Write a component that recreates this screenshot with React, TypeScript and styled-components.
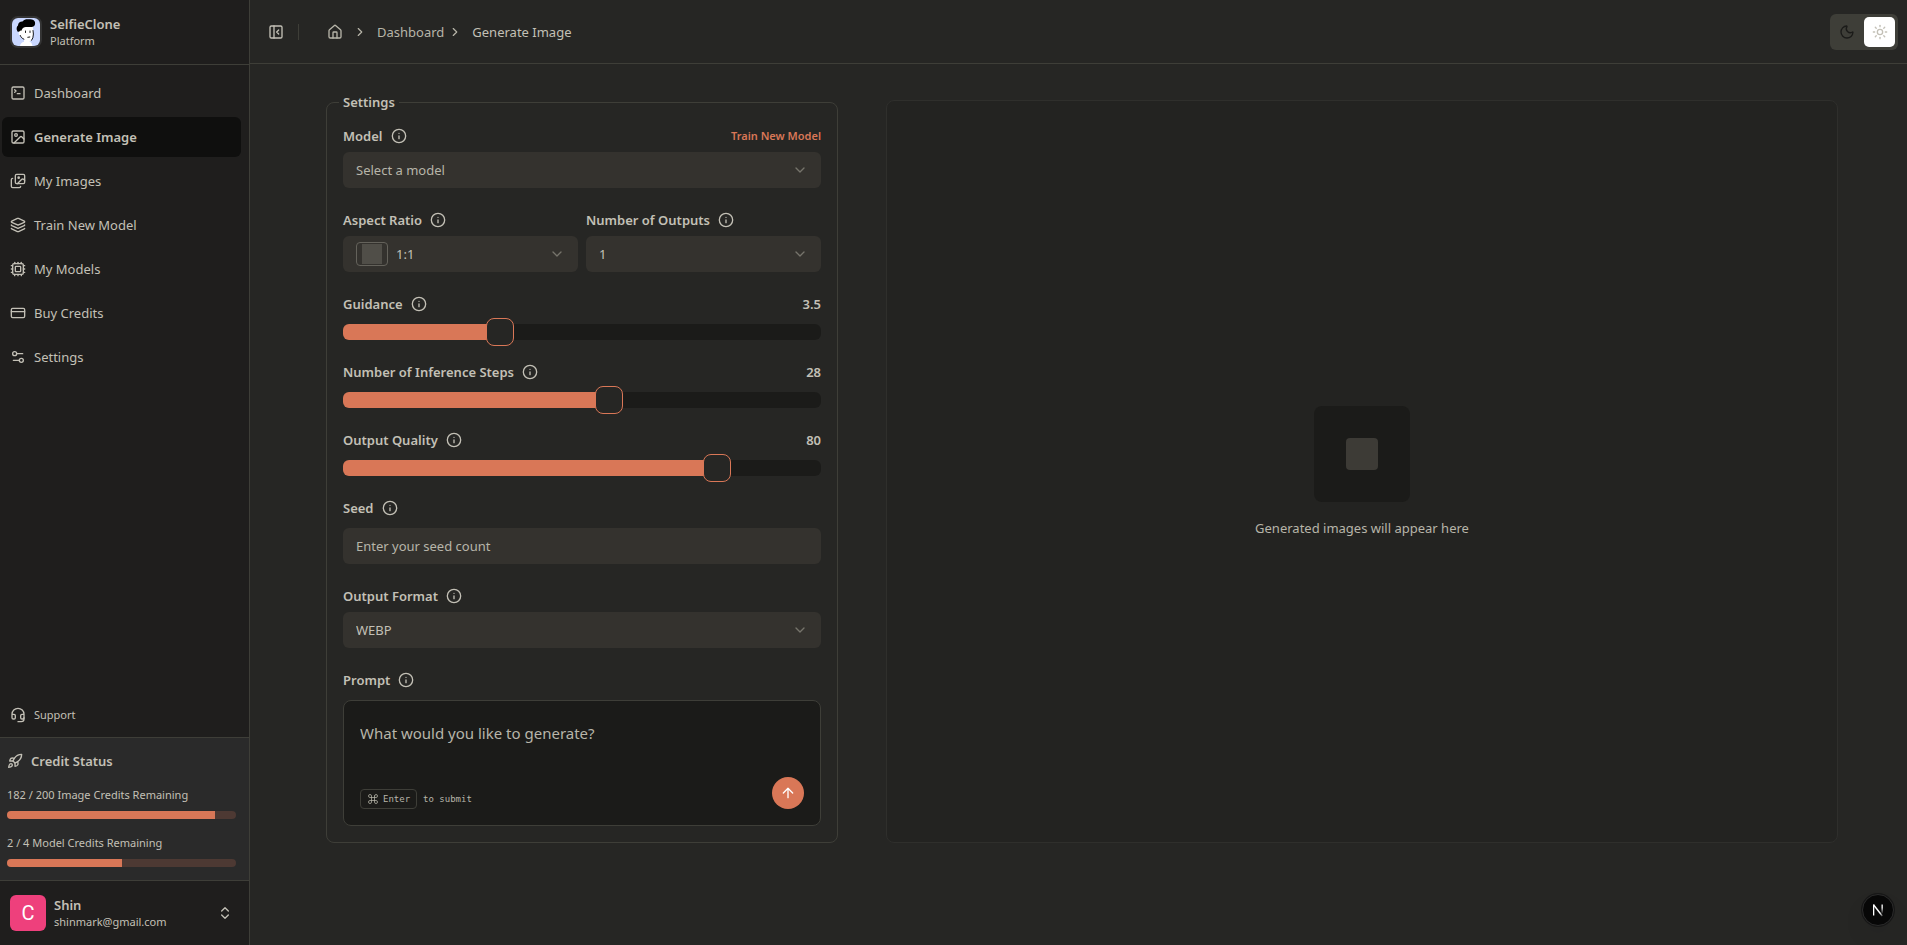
import React, { useState } from 'react';
import styled, { createGlobalStyle, css } from 'styled-components';
import {
  ArrowUp,
  ChevronDown,
  ChevronRight,
  ChevronsUpDown,
  Command,
  Cpu,
  CreditCard,
  Headset,
  House,
  Image as ImageIcon,
  Images,
  Info,
  Layers,
  Moon,
  PanelLeftClose,
  Rocket,
  Settings2,
  SquareTerminal,
  Sun,
} from 'lucide-react';

const color = {
  background: '#262624',
  foreground: '#c3c0b6',
  muted: '#1b1b19',
  mutedText: '#b7b5a9',
  border: '#3e3e38',
  field: '#34322e',
  swatch: '#504e48',
  primary: '#d97757',
  sidebar: '#1f1e1d',
  sidebarActive: '#0f0f0e',
};

const GlobalStyle = createGlobalStyle`
  *, *::before, *::after { box-sizing: border-box; }
  body {
    margin: 0;
    background: ${color.background};
    color: ${color.foreground};
    font-family: 'Noto Sans', 'Open Sans', sans-serif;
    font-size: 13px;
    line-height: 20px;
  }
  button, input, select, textarea { font: inherit; color: inherit; }
  button { cursor: pointer; }
  a { color: inherit; text-decoration: none; }
  svg { flex-shrink: 0; display: block; }
`;

const Shell = styled.div`
  display: flex;
  min-height: 100vh;
`;

/* ---------- sidebar ---------- */

const Sidebar = styled.aside`
  display: flex;
  flex-direction: column;
  flex: 0 0 250px;
  background: ${color.sidebar};
  border-right: 1px solid ${color.border};
`;

const Brand = styled.a`
  display: flex;
  align-items: center;
  gap: 8px;
  height: 65px;
  padding: 0 10px;
  border-bottom: 1px solid ${color.border};
`;

const BrandMark = styled.span`
  display: block;
  width: 32px;
  height: 32px;
  border: 2px solid #343434;
  border-radius: 8px;
  overflow: hidden;
`;

const TwoLines = styled.span`
  display: flex;
  flex-direction: column;
  flex: 1;
  min-width: 0;
`;

const Strong = styled.span`
  font-weight: 600;
  line-height: 18px;
`;

const Small = styled.span`
  font-size: 11px;
  line-height: 16px;
`;

const Nav = styled.nav`
  display: flex;
  flex-direction: column;
  gap: 4px;
  padding: 8px 8px 8px 2px;
`;

const NavLink = styled.a<{ $active?: boolean; $small?: boolean }>`
  display: flex;
  align-items: center;
  gap: 8px;
  height: ${p => (p.$small ? 28 : 40)}px;
  padding: 0 8px;
  border-radius: 6px;
  font-size: ${p => (p.$small ? 11 : 13)}px;
  ${p =>
    p.$active &&
    css`
      background: ${color.sidebarActive};
      font-weight: 600;
    `}
`;

const SidebarBottom = styled.div`
  display: flex;
  flex-direction: column;
  margin-top: auto;
`;

const CreditPanel = styled.section`
  display: flex;
  flex-direction: column;
  gap: 16px;
  padding: 13px 13px 13px 7px;
  background: #2a2a2a;
  border-top: 1px solid ${color.border};
  border-bottom: 1px solid ${color.border};
`;

const CreditTitle = styled.h2`
  display: flex;
  align-items: center;
  gap: 8px;
  margin: 0;
  font-size: 13px;
  line-height: 20px;
  font-weight: 600;
`;

const CreditItem = styled.label`
  display: flex;
  flex-direction: column;
  gap: 8px;
  font-size: 11px;
  line-height: 16px;
`;

const CreditBar = styled.progress`
  appearance: none;
  display: block;
  width: 100%;
  height: 8px;
  border: 0;
  border-radius: 4px;
  overflow: hidden;
  background: #4d3933;
  &::-webkit-progress-bar { background: #4d3933; }
  &::-webkit-progress-value { background: ${color.primary}; }
  &::-moz-progress-bar { background: ${color.primary}; }
`;

const UserButton = styled.button`
  display: flex;
  align-items: center;
  gap: 8px;
  height: 64px;
  padding: 0 16px 0 10px;
  border: 0;
  background: transparent;
  text-align: left;
`;

const Avatar = styled.span`
  display: grid;
  place-items: center;
  width: 36px;
  height: 36px;
  border-radius: 6px;
  background: #ee407c;
  color: #fff;
  font-family: Roboto, sans-serif;
  font-size: 20px;
`;

/* ---------- top bar ---------- */

const Content = styled.div`
  display: flex;
  flex-direction: column;
  flex: 1;
  min-width: 0;
`;

const TopBar = styled.header`
  display: flex;
  align-items: center;
  height: 64px;
  padding: 0 9px 0 16px;
  border-bottom: 1px solid ${color.border};
`;

const IconButton = styled.button`
  display: grid;
  place-items: center;
  width: 20px;
  height: 28px;
  padding: 0;
  border: 0;
  background: transparent;
`;

const Divider = styled.span`
  width: 1px;
  height: 16px;
  margin: 0 28px 0 12px;
  background: ${color.border};
`;

const Crumbs = styled.nav`
  display: flex;
  align-items: center;
  color: ${color.mutedText};
`;

const CrumbHome = styled.a`
  margin-right: 10px;
`;

const Crumb = styled.a`
  margin: 0 4px 0 10px;
`;

const CrumbCurrent = styled.span`
  margin-left: 10px;
  color: ${color.foreground};
`;

const ThemeSwitch = styled.div`
  display: flex;
  gap: 4px;
  margin-left: auto;
  padding: 3px;
  border-radius: 6px;
  background: ${color.border};
`;

const ThemeButton = styled.button<{ $on?: boolean }>`
  display: grid;
  place-items: center;
  width: ${p => (p.$on ? 31 : 27)}px;
  height: 30px;
  padding: 0;
  border: 0;
  border-radius: 5px;
  background: ${p => (p.$on ? '#fff' : 'transparent')};
  color: ${p => (p.$on ? color.foreground : color.muted)};
`;

/* ---------- workspace ---------- */

const Workspace = styled.main`
  display: flex;
  align-items: stretch;
  gap: 48px;
  padding: 28px 69px 32px 76px;
`;

const SettingsForm = styled.form`
  flex: 0 1 512px;
  min-width: 0;
`;

const SettingsGroup = styled.fieldset`
  display: flex;
  flex-direction: column;
  gap: 24px;
  min-width: 0;
  margin: 0;
  padding: 16px;
  border: 1px solid ${color.border};
  border-radius: 8px;
`;

const Legend = styled.legend`
  margin-left: -4px;
  padding: 0 4px;
  font-weight: 600;
`;

const Columns = styled.div`
  display: grid;
  grid-template-columns: 1fr 1fr;
  gap: 8px;
`;

const FieldBox = styled.div<{ $gap: number }>`
  display: flex;
  flex-direction: column;
  gap: ${p => p.$gap}px;
`;

const FieldHead = styled.div`
  display: flex;
  align-items: center;
  justify-content: space-between;
  line-height: 16px;
  font-weight: 600;
`;

const FieldLabel = styled.label`
  display: flex;
  align-items: center;
  gap: 8px;
`;

const TrainLink = styled.a`
  color: ${color.primary};
  font-size: 11px;
`;

const SelectFrame = styled.div`
  display: grid;
  align-items: center;
  color: ${color.foreground};
  & > * { grid-area: 1 / 1; }
  & > svg {
    justify-self: end;
    margin-right: 13px;
    color: ${color.mutedText};
    opacity: 0.5;
    pointer-events: none;
  }
`;

const SelectBox = styled.select<{ $indent?: boolean; $placeholder?: boolean }>`
  appearance: none;
  width: 100%;
  height: 36px;
  padding: 0 32px 0 ${p => (p.$indent ? 53 : 13)}px;
  border: 0;
  border-radius: 6px;
  background: ${color.field};
  color: ${p => (p.$placeholder ? color.mutedText : color.foreground)};
`;

const RatioFrame = styled.span`
  display: grid;
  place-items: center;
  width: 32px;
  height: 24px;
  margin-left: 13px;
  border: 1px solid #64625b;
  border-radius: 4px;
  pointer-events: none;
`;

const RatioShape = styled.span`
  width: 20px;
  height: 20px;
  background: ${color.swatch};
`;

const TextInput = styled.input`
  width: 100%;
  height: 36px;
  padding: 0 13px;
  border: 0;
  border-radius: 6px;
  background: ${color.field};
  &::placeholder { color: ${color.mutedText}; opacity: 1; }
`;

const Range = styled.input`
  appearance: none;
  display: block;
  width: 100%;
  height: 16px;
  margin: 0;
  border-radius: 6px;
  background: linear-gradient(
    to right,
    ${color.primary} calc(14px + var(--ratio) * (100% - 28px)),
    ${color.muted} 0
  );
  &::-webkit-slider-thumb {
    appearance: none;
    width: 28px;
    height: 28px;
    border: 1px solid ${color.primary};
    border-radius: 8px;
    background: ${color.background};
  }
  &::-moz-range-thumb {
    width: 28px;
    height: 28px;
    border: 1px solid ${color.primary};
    border-radius: 8px;
    background: ${color.background};
  }
`;

const PromptBox = styled.div`
  display: flex;
  flex-direction: column;
  padding: 16px;
  border: 1px solid ${color.border};
  border-radius: 8px;
  background: ${color.muted};
`;

const PromptText = styled.textarea`
  display: block;
  width: 100%;
  height: 60px;
  padding: 4px 0;
  border: 0;
  outline: 0;
  resize: none;
  background: transparent;
  font-size: 15px;
  line-height: 24px;
  &::placeholder { color: ${color.mutedText}; opacity: 1; }
`;

const PromptActions = styled.div`
  display: flex;
  align-items: flex-end;
  justify-content: space-between;
`;

const Hint = styled.span`
  display: flex;
  align-items: center;
  gap: 6px;
  color: ${color.mutedText};
  font-family: 'DejaVu Sans Mono', monospace;
  font-size: 9px;
  line-height: 18px;
`;

const Key = styled.kbd`
  display: flex;
  align-items: center;
  gap: 4px;
  padding: 0 6px;
  border: 1px solid ${color.border};
  border-radius: 4px;
  font: inherit;
`;

const SubmitButton = styled.button`
  display: grid;
  place-items: center;
  width: 32px;
  height: 32px;
  padding: 0;
  border: 0;
  border-radius: 50%;
  background: ${color.primary};
  color: #fff;
`;

const Preview = styled.section`
  display: flex;
  flex-direction: column;
  align-items: center;
  justify-content: center;
  flex: 1;
  gap: 16px;
  min-width: 0;
  margin-top: 8px;
  border: 1px solid #2f2f2c;
  border-radius: 8px;
  background: #232321;
  color: ${color.mutedText};
`;

const PreviewTile = styled.div`
  display: grid;
  place-items: center;
  width: 96px;
  height: 96px;
  border-radius: 8px;
  background: ${color.muted};
`;

const PreviewShape = styled.span`
  width: 32px;
  height: 32px;
  border-radius: 4px;
  background: #3d3b36;
`;

const DevBadge = styled.button`
  position: fixed;
  right: 13px;
  bottom: 19px;
  display: grid;
  place-items: center;
  width: 32px;
  height: 32px;
  padding: 0;
  border: 1px solid #2b2b2b;
  border-radius: 50%;
  background: #070707;
  box-shadow: 0 0 0 1px #171717, 0 12px 24px rgba(0, 0, 0, 0.06);
`;

/* ---------- pieces ---------- */

function FaceLogo() {
  return (
    <svg width="28" height="28" viewBox="0 0 28 28" aria-hidden="true">
      <rect width="28" height="28" fill="#c9d7ff" />
      <path d="M8 28c.3-2.200 1.800-3.600 4-4.200v-2.600c-2-.6-3.200-2-3.700-3.700-1.200-.2-1.800-1.200-1.600-2.500L7.500 10 12 7.500h8.500c.7 2.500.8 5 .7 7.500-.1 3-.6 5.500-1.700 7.200-.6.9-1.500 1.200-2.500 1.100 2 .9 3.300 2.500 3.500 4.700z" fill="#fff" />
      <path d="M5.500 13.500C4 11 4.600 8.600 6 7.400c.1-2.600 2.200-4.200 4.500-4C12 1.400 14.800.9 17 1.300c2.800-.5 5.600.8 6 2.900.6 2.300-.7 4.500-3.200 4.800-2.600.3-5-.4-7.300.3-1.700.6-2.500 1.700-3 3.400-.6-.5-1.500-.3-1.700.6-.7.500-1.600.7-2.300.2z" fill="#000" />
      <path d="M21 12.500l.4 3.500-.5 3.800-1.400 2.500M8.300 17.500c.6 1.700 1.700 2.900 3.600 3.700M13.500 13v1.500M18 13v1.500M15.800 19.300l2-.3" fill="none" stroke="#000" strokeWidth="0.900" strokeLinecap="round" />
    </svg>
  );
}

function BadgeLogo() {
  return (
    <svg width="14" height="14" viewBox="0 0 14 14" fill="none" aria-hidden="true">
      <defs>
        <linearGradient id="badge-side" x1="0" y1="2" x2="0" y2="11" gradientUnits="userSpaceOnUse">
          <stop offset="0.3" stopColor="#fff" />
          <stop offset="1" stopColor="#fff" stopOpacity="0" />
        </linearGradient>
        <linearGradient id="badge-slash" x1="3" y1="2" x2="12" y2="13" gradientUnits="userSpaceOnUse">
          <stop offset="0.7" stopColor="#fff" />
          <stop offset="1" stopColor="#fff" stopOpacity="0.2" />
        </linearGradient>
      </defs>
      <rect x="2" y="1.500" width="1.300" height="11" fill="#fff" />
      <path d="M2.500 1.800L11.300 13" stroke="url(#badge-slash)" strokeWidth="1.400" />
      <rect x="10.500" y="1.500" width="1.300" height="9" fill="url(#badge-side)" />
    </svg>
  );
}

type FieldProps = {
  id: string;
  label: string;
  gap?: number;
  aside?: React.ReactNode;
  children: React.ReactNode;
};

function Field({ id, label, gap = 8, aside, children }: FieldProps) {
  return (
    <FieldBox $gap={gap}>
      <FieldHead>
        <FieldLabel htmlFor={id}>
          {label}
          <Info size={16} />
        </FieldLabel>
        {aside}
      </FieldHead>
      {children}
    </FieldBox>
  );
}

type SliderProps = { id: string; label: string; initial: number; max: number; step: number };

function SliderField({ id, label, initial, max, step }: SliderProps) {
  const [value, setValue] = useState(initial);
  return (
    <Field id={id} label={label} gap={12} aside={<span>{value}</span>}>
      <Range
        id={id}
        type="range"
        min={0}
        max={max}
        step={step}
        value={value}
        onChange={e => setValue(Number(e.target.value))}
        style={{ '--ratio': value / max } as React.CSSProperties}
      />
    </Field>
  );
}

type SelectProps = {
  id: string;
  options: string[];
  placeholder?: string;
  adornment?: React.ReactNode;
};

function SelectField({ id, options, placeholder, adornment }: SelectProps) {
  const [value, setValue] = useState(placeholder ? '' : options[0]);
  return (
    <SelectFrame>
      <SelectBox
        id={id}
        value={value}
        onChange={e => setValue(e.target.value)}
        $indent={Boolean(adornment)}
        $placeholder={value === ''}
      >
        {placeholder && (
          <option value="" disabled>
            {placeholder}
          </option>
        )}
        {options.map(o => (
          <option key={o} value={o}>
            {o}
          </option>
        ))}
      </SelectBox>
      {adornment}
      <ChevronDown size={16} />
    </SelectFrame>
  );
}

const navItems = [
  { label: 'Dashboard', icon: SquareTerminal },
  { label: 'Generate Image', icon: ImageIcon, active: true },
  { label: 'My Images', icon: Images },
  { label: 'Train New Model', icon: Layers },
  { label: 'My Models', icon: Cpu },
  { label: 'Buy Credits', icon: CreditCard },
  { label: 'Settings', icon: Settings2 },
];

const credits = [
  { label: '182 / 200 Image Credits Remaining', value: 182, max: 200 },
  { label: '2 / 4 Model Credits Remaining', value: 2, max: 4 },
];

export default function App() {
  return (
    <>
      <GlobalStyle />
      <Shell>
        <Sidebar>
          <Brand href="#">
            <BrandMark>
              <FaceLogo />
            </BrandMark>
            <TwoLines>
              <Strong>SelfieClone</Strong>
              <Small>Platform</Small>
            </TwoLines>
          </Brand>
          <Nav aria-label="Main">
            {navItems.map(({ label, icon: Icon, active }) => (
              <NavLink key={label} href="#" $active={active} aria-current={active ? 'page' : undefined}>
                <Icon size={16} />
                {label}
              </NavLink>
            ))}
          </Nav>
          <SidebarBottom>
            <Nav aria-label="Help">
              <NavLink href="#" $small>
                <Headset size={16} />
                Support
              </NavLink>
            </Nav>
            <CreditPanel>
              <CreditTitle>
                <Rocket size={16} />
                Credit Status
              </CreditTitle>
              {credits.map(c => (
                <CreditItem key={c.label}>
                  {c.label}
                  <CreditBar value={c.value} max={c.max} />
                </CreditItem>
              ))}
            </CreditPanel>
            <UserButton type="button">
              <Avatar>C</Avatar>
              <TwoLines>
                <Strong>Shin</Strong>
                <Small>shinmark@gmail.com</Small>
              </TwoLines>
              <ChevronsUpDown size={16} />
            </UserButton>
          </SidebarBottom>
        </Sidebar>

        <Content>
          <TopBar>
            <IconButton type="button" aria-label="Toggle sidebar">
              <PanelLeftClose size={16} />
            </IconButton>
            <Divider />
            <Crumbs aria-label="Breadcrumb">
              <CrumbHome href="#" aria-label="Home">
                <House size={16} />
              </CrumbHome>
              <ChevronRight size={14} />
              <Crumb href="#">Dashboard</Crumb>
              <ChevronRight size={14} />
              <CrumbCurrent aria-current="page">Generate Image</CrumbCurrent>
            </Crumbs>
            <ThemeSwitch>
              <ThemeButton type="button" aria-label="Dark theme">
                <Moon size={16} />
              </ThemeButton>
              <ThemeButton type="button" aria-label="Light theme" $on>
                <Sun size={16} />
              </ThemeButton>
            </ThemeSwitch>
          </TopBar>

          <Workspace>
            <SettingsForm onSubmit={e => e.preventDefault()}>
              <SettingsGroup>
                <Legend>Settings</Legend>
                <Field id="model" label="Model" aside={<TrainLink href="#">Train New Model</TrainLink>}>
                  <SelectField id="model" placeholder="Select a model" options={['Flux Dev']} />
                </Field>
                <Columns>
                  <Field id="ratio" label="Aspect Ratio">
                    <SelectField
                      id="ratio"
                      options={['1:1', '16:9', '9:16']}
                      adornment={
                        <RatioFrame>
                          <RatioShape />
                        </RatioFrame>
                      }
                    />
                  </Field>
                  <Field id="outputs" label="Number of Outputs">
                    <SelectField id="outputs" options={['1', '2', '3', '4']} />
                  </Field>
                </Columns>
                <SliderField id="guidance" label="Guidance" initial={3.5} max={11} step={0.5} />
                <SliderField id="steps" label="Number of Inference Steps" initial={28} max={50} step={1} />
                <SliderField id="quality" label="Output Quality" initial={80} max={100} step={1} />
                <Field id="seed" label="Seed" gap={12}>
                  <TextInput id="seed" type="text" placeholder="Enter your seed count" />
                </Field>
                <Field id="format" label="Output Format">
                  <SelectField id="format" options={['WEBP', 'PNG', 'JPG']} />
                </Field>
                <Field id="prompt" label="Prompt" gap={12}>
                  <PromptBox>
                    <PromptText id="prompt" placeholder="What would you like to generate?" />
                    <PromptActions>
                      <Hint>
                        <Key>
                          <Command size={12} strokeWidth={1.5} />
                          Enter
                        </Key>
                        to submit
                      </Hint>
                      <SubmitButton type="submit" aria-label="Generate">
                        <ArrowUp size={16} />
                      </SubmitButton>
                    </PromptActions>
                  </PromptBox>
                </Field>
              </SettingsGroup>
            </SettingsForm>

            <Preview>
              <PreviewTile>
                <PreviewShape />
              </PreviewTile>
              <span>Generated images will appear here</span>
            </Preview>
          </Workspace>
        </Content>
      </Shell>
      <DevBadge type="button" aria-label="Developer tools">
        <BadgeLogo />
      </DevBadge>
    </>
  );
}
